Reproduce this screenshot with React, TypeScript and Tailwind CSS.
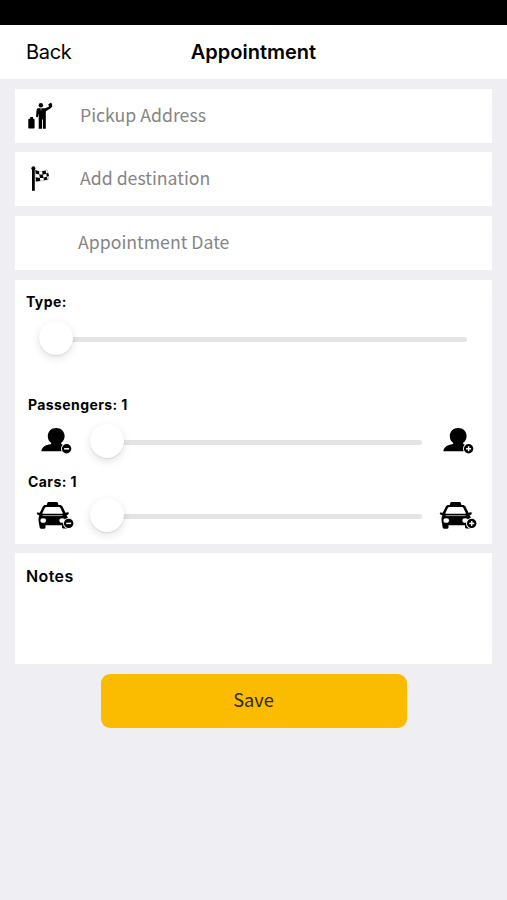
import type { ReactNode } from 'react'

const FIELD_FONT = "font-['Noto_Sans_CJK_SC','Open_Sans',sans-serif]"

function TravelerIcon() {
  return (
    <svg width="26" height="28" viewBox="0 0 26 28" fill="#000">
      <circle cx="12.900" cy="3.200" r="2.200" />
      <path d="M10 6.300h7.200l4-1.700-1-2 2.300-1.900 1.600 1v3l-1.700 1.700-4.600 2.900V26.700h-2.900V17.500h-.9v9.200h-3.300V11l-.8 4.200-1.900-.5.500-5.600c.2-1.700.6-2.600 1.500-2.800z" />
      <path d="M12.500 6.300h1l-.5 3z" fill="#fff" />
      <path d="M2.200 16.800v-1.900h2.800v1.900h.6c.7 0 1 .4 1 1.100v7.600c0 .7-.4 1.100-1.100 1.100H1.400c-.7 0-1.100-.4-1.100-1.100v-7.600c0-.7.4-1.100 1.100-1.100z" />
    </svg>
  )
}

function FlagIcon() {
  return (
    <svg width="20" height="26" viewBox="0 0 20 26" fill="#000">
      <circle cx="2.400" cy="2.200" r="2" />
      <path d="M1 2.500h2.800v22.300H1z" />
      <path d="M4.200 4.200c5 2.200 8 1.700 11.800-.6l2 9.500c-4.800 2.100-8 1.600-12.800 2.100z" fill="#fff" stroke="#999" strokeWidth=".5" />
      <path d="M4.200 4l3.800 1.200.4 3.300-3.600-.8zM11 5.300l3.500-.9.900 3.400-3.700.9zM8.200 8.300l3.700.2.700 3.400-3.700.1zM15.200 7.700l2-1 .8 3.200-2.100.8zM4.800 11.200l4.100.7.4 3-4.500.7zM12.500 11.800l3.400-1.200.6 3.200-3.600.5z" />
    </svg>
  )
}

function Badge({ cx, cy, plus }: { cx: number; cy: number; plus?: boolean }) {
  return (
    <g>
      <circle cx={cx} cy={cy} r="5.600" fill="#fff" />
      <circle cx={cx} cy={cy} r="4.700" fill="#000" />
      <path d={`M${cx - 2.5} ${cy}h5`} stroke="#fff" strokeWidth="1.500" />
      {plus && <path d={`M${cx} ${cy - 2.5}v5`} stroke="#fff" strokeWidth="1.500" />}
    </g>
  )
}

function PersonIcon({ plus }: { plus?: boolean }) {
  return (
    <svg width="32" height="28" viewBox="0 0 32 28" fill="#000">
      <path d="M15.200 1c4.900 0 8.400 3.500 8.400 8.100 0 3.200-1.400 5.400-3.600 7 0 2 4 1.800 6 4.400v3.800H.4c.2-4.500 4.700-6.400 9-7.100.9-.2 1.200-.8.700-1.400C7.900 14.200 6.800 12.200 6.800 9.100 6.800 4.500 10.300 1 15.200 1z" />
      <Badge cx={25.6} cy={21.8} plus={plus} />
    </svg>
  )
}

function TaxiIcon({ plus }: { plus?: boolean }) {
  return (
    <svg width="38" height="30" viewBox="0 0 38 30" fill="#000">
      <path d="M13 1.900h7.200c1.100 0 1.600.5 1.800 1.400l.5 2.200H10.700l.5-2.200c.2-.9.700-1.400 1.800-1.400z" />
      <path d="M9.500 4.900h14.300c1.300 0 2.100.5 2.700 1.600l3 6.300 2.300-.5c1.200-.1 1.300 1.700.3 2.200l-1.500.7c1.300 1.900 1.700 4 1.500 9.300l-.5 3c-.2.700-.5 1-1.200 1h-3.100c-.8 0-1.300-.5-1.300-1.200v-2H9.500v2.300c0 .7-.4 1.100-1.100 1.100H5c-.8 0-1.200-.5-1.300-1.200l-.7-4.100c-.8-3.500-.7-6.200.4-8L1.400 14.500c-1-.5-.7-2.300.4-2.100l2 .4 3-6.300c.5-1.100 1.400-1.600 2.700-1.600z" />
      <path d="M10.200 7h12.900c.6 0 .9.200 1.200.8l2.500 5.100c.2.500 0 .8-.5.800H6.900c-.5 0-.7-.3-.5-.8L9 7.800c.3-.6.600-.8 1.200-.8z" fill="#fff" />
      <path d="M6.600 15.600h20" stroke="#aaa" strokeWidth=".9" />
      <ellipse cx="7.200" cy="20.500" rx="2.800" ry="2.300" fill="#fff" />
      <ellipse cx="26.200" cy="20.500" rx="2.800" ry="2.300" fill="#fff" />
      <Badge cx={32.7} cy={23.4} plus={plus} />
    </svg>
  )
}

function Field({ label, icon, indent }: { label: string; icon?: ReactNode; indent: string }) {
  return (
    <div className="flex h-[54px] items-center bg-white">
      <div className={`flex shrink-0 pl-[13px] ${indent}`}>{icon}</div>
      <span className={`pb-[4px] text-[17.700px] leading-[50px] text-[#858585] ${FIELD_FONT}`}>{label}</span>
    </div>
  )
}

function Slider() {
  return (
    <div className="flex flex-1 items-center">
      <div className="z-10 size-[34px] shrink-0 rounded-full bg-white shadow-[0_3px_8px_rgba(0,0,0,0.12),0_1px_1px_rgba(0,0,0,0.08)]" />
      <div className="-ml-1 mt-[3px] h-[5px] flex-1 rounded-full bg-[#e4e4e4]" />
    </div>
  )
}

export default function App() {
  return (
    <div className="flex h-[900px] w-[507px] flex-col overflow-hidden bg-[#efeef3] font-['Inter',sans-serif] text-black">
      <div className="h-[25px] shrink-0 bg-black" />

      {/* Nav bar */}
      <nav className="grid h-[54px] shrink-0 grid-cols-[1fr_auto_1fr] items-center bg-white px-[26px]">
        <span className="text-[20px] leading-[54px] tracking-[-0.3px]">Back</span>
        <span className="text-[20px] font-semibold leading-[54px]">Appointment</span>
        <span />
      </nav>

      <main className="flex flex-col px-[15px] pt-[9.500px]">
        <div className="flex flex-col gap-[9.500px]">
          <Field label="Pickup Address" icon={<TravelerIcon />} indent="w-[65px]" />
          <Field label="Add destination" icon={<div className="pl-[3px]"><FlagIcon /></div>} indent="w-[65px]" />
          <Field label="Appointment Date" indent="w-[63px]" />
        </div>

        {/* Ride options */}
        <section className="mt-[10px] h-[264px] overflow-hidden bg-white text-[14px] font-bold leading-5 tracking-[0.4px]">
          <div className="pl-[11px] pt-[12px]">Type:</div>
          <div className="flex pl-6 pr-[25px] pt-[9px]"><Slider /></div>
          <div className="pl-[13px] pt-[40px]">Passengers: 1</div>
          <div className="mt-[9px] flex h-[34px] items-center pl-[26px] pr-[17px]">
            <div className="w-[49px]"><PersonIcon /></div>
            <Slider />
            <div className="flex w-[53px] justify-end"><PersonIcon plus /></div>
          </div>
          <div className="mt-[14px] pl-[13px]">Cars: 1</div>
          <div className="mt-[6px] flex h-[34px] items-center pl-[21px] pr-[15px]">
            <div className="w-[54px]"><TaxiIcon /></div>
            <Slider />
            <div className="flex w-[55px] justify-end"><TaxiIcon plus /></div>
          </div>
        </section>

        {/* Notes */}
        <section className="mt-[9px] h-[111px] bg-white pl-[11px] pt-[11px] text-[16px] font-semibold leading-6 tracking-[0.4px]">Notes</section>

        <button className={`mx-auto mt-[10px] h-[54px] w-[306px] rounded-[9px] bg-[#fbbc00] pb-[4px] text-[18.200px] leading-[50px] text-[#2f2a14] ${FIELD_FONT}`}>
          Save
        </button>
      </main>
    </div>
  )
}
